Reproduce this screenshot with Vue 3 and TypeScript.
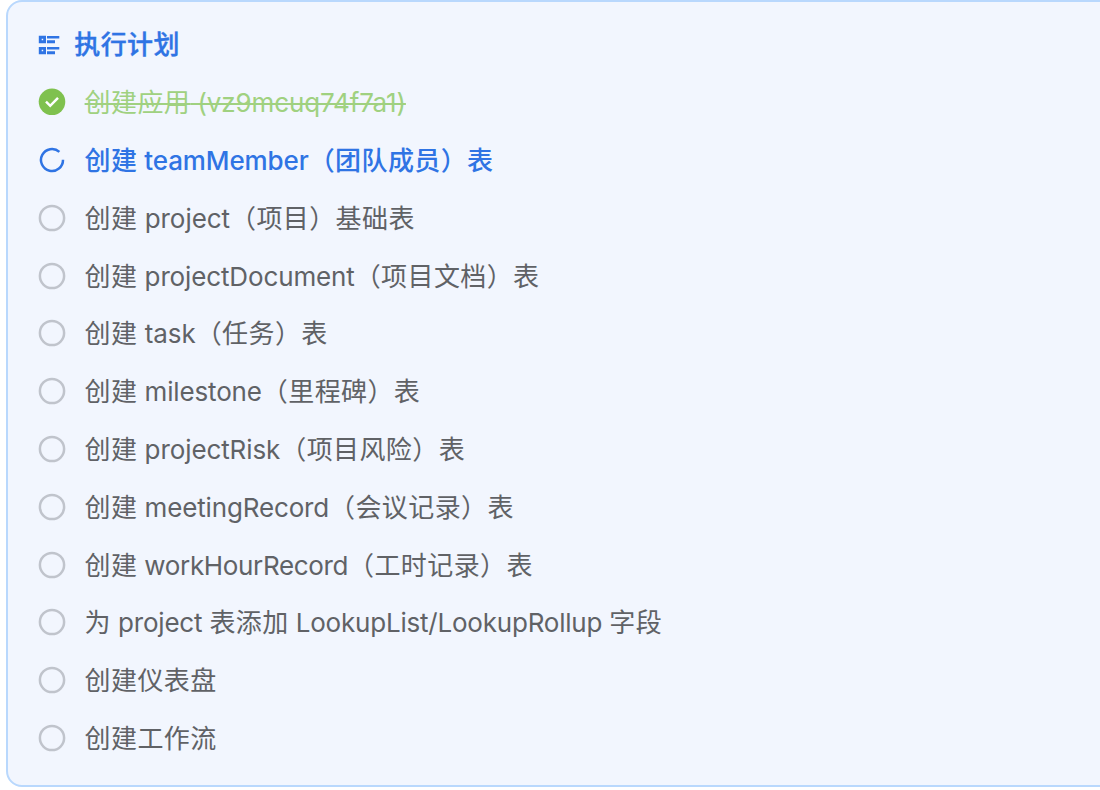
<script setup lang="ts">
type Status = 'done' | 'active' | 'pending'
interface Step {
  text: string
  status: Status
  /** letter spacing of the Latin part, in px */
  tracking?: number
}
interface Segment {
  text: string
  latin: boolean
}

const steps: Step[] = [
  { text: '创建应用 (vz9mcuq74f7a1)', status: 'done', tracking: -0.12 },
  { text: '创建 teamMember（团队成员）表', status: 'active', tracking: -0.1 },
  { text: '创建 project（项目）基础表', status: 'pending', tracking: -0.05 },
  { text: '创建 projectDocument（项目文档）表', status: 'pending', tracking: -0.13 },
  { text: '创建 task（任务）表', status: 'pending', tracking: -0.05 },
  { text: '创建 milestone（里程碑）表', status: 'pending', tracking: -0.15 },
  { text: '创建 projectRisk（项目风险）表', status: 'pending', tracking: -0.1 },
  { text: '创建 meetingRecord（会议记录）表', status: 'pending', tracking: -0.15 },
  { text: '创建 workHourRecord（工时记录）表', status: 'pending', tracking: -0.35 },
  { text: '为 project 表添加 LookupList/LookupRollup 字段', status: 'pending', tracking: -0.21 },
  { text: '创建仪表盘', status: 'pending' },
  { text: '创建工作流', status: 'pending' },
]

const segments = (text: string): Segment[] =>
  (text.match(/[\x20-\x7e]+|[^\x20-\x7e]+/g) ?? []).map((part) => ({
    text: part,
    latin: part.charCodeAt(0) < 128,
  }))
</script>

<template>
  <section class="plan">
    <header class="plan-header">
      <svg class="plan-icon" width="22" height="20" viewBox="0 0 22 20">
        <path
          fill-rule="evenodd"
          d="M.8 .8h7.2v7.4H.8zM3.7 3.8v1.5h1.5V3.8zM.8 11.9h7.2v7.3H.8zM3.7 14.8v1.5h1.5v-1.5zM9 .9h12.3v2.6H9zM9 5.2h8v3H9zM9 11.9h12.3v2.5H9zM9 16.2h8v3H9z"
        />
      </svg>
      <h2 class="plan-title">执行计划</h2>
    </header>
    <ul class="steps">
      <li v-for="step in steps" :key="step.text" class="step" :class="step.status">
        <svg class="step-icon" width="28" height="28" viewBox="0 0 28 28">
          <template v-if="step.status === 'done'">
            <circle cx="14" cy="13.8" r="13.3" fill="#7fc14e" />
            <path d="M8 13.7l4.2 4.1 7.8-8" fill="none" stroke="#fff" stroke-width="2.5" />
          </template>
          <path
            v-else-if="step.status === 'active'"
            d="M21.4 5.9A11 11 0 1 0 25 13.8"
            fill="none"
            stroke="#2f74e4"
            stroke-width="2.5"
          />
          <circle v-else cx="14" cy="14" r="12.1" fill="none" stroke="#c0c4cc" stroke-width="2.5" />
        </svg>
        <span class="step-text" :style="{ '--tracking': `${step.tracking ?? 0}px` }"><span
          v-for="(part, i) in segments(step.text)"
          :key="i"
          :class="{ latin: part.latin }"
        >{{ part.text }}</span></span>
      </li>
    </ul>
  </section>
</template>

<style>
body {
  background: #fff;
  overflow: hidden;
}
</style>

<style scoped>
.plan {
  box-sizing: border-box;
  width: 1120px;
  height: 787px;
  margin-left: 6px;
  padding: 23px 30px;
  border: 2px solid #b9d8fd;
  border-radius: 16px;
  background: #f2f6fe;
  font-family: Inter, 'Noto Sans CJK SC', sans-serif;
  font-size: 26px;
  letter-spacing: 0.4px;
}
.plan-header {
  display: flex;
  align-items: center;
  height: 40px;
  gap: 14.3px;
  color: #2f74e4;
}
.plan-icon {
  fill: currentColor;
}
.plan-title {
  margin: 0;
  font-size: 26px;
  font-weight: 500;
  line-height: 40px;
  -webkit-text-stroke: 0.35px currentColor;
}
.steps {
  margin: 8.3px 0 0;
  padding: 0;
  list-style: none;
}
.step {
  display: flex;
  align-items: center;
  height: 57.8px;
  gap: 18.6px;
  color: #606266;
  white-space: nowrap;
}
.step-text {
  margin-top: 2.2px;
  line-height: 42px;
  white-space: pre;
}
.latin {
  letter-spacing: var(--tracking);
}
.done {
  color: #a0d180;
}
.done .step-text {
  text-decoration: line-through;
  text-decoration-thickness: 2px;
}
.active {
  color: #2f74e4;
  font-weight: 500;
}
</style>
